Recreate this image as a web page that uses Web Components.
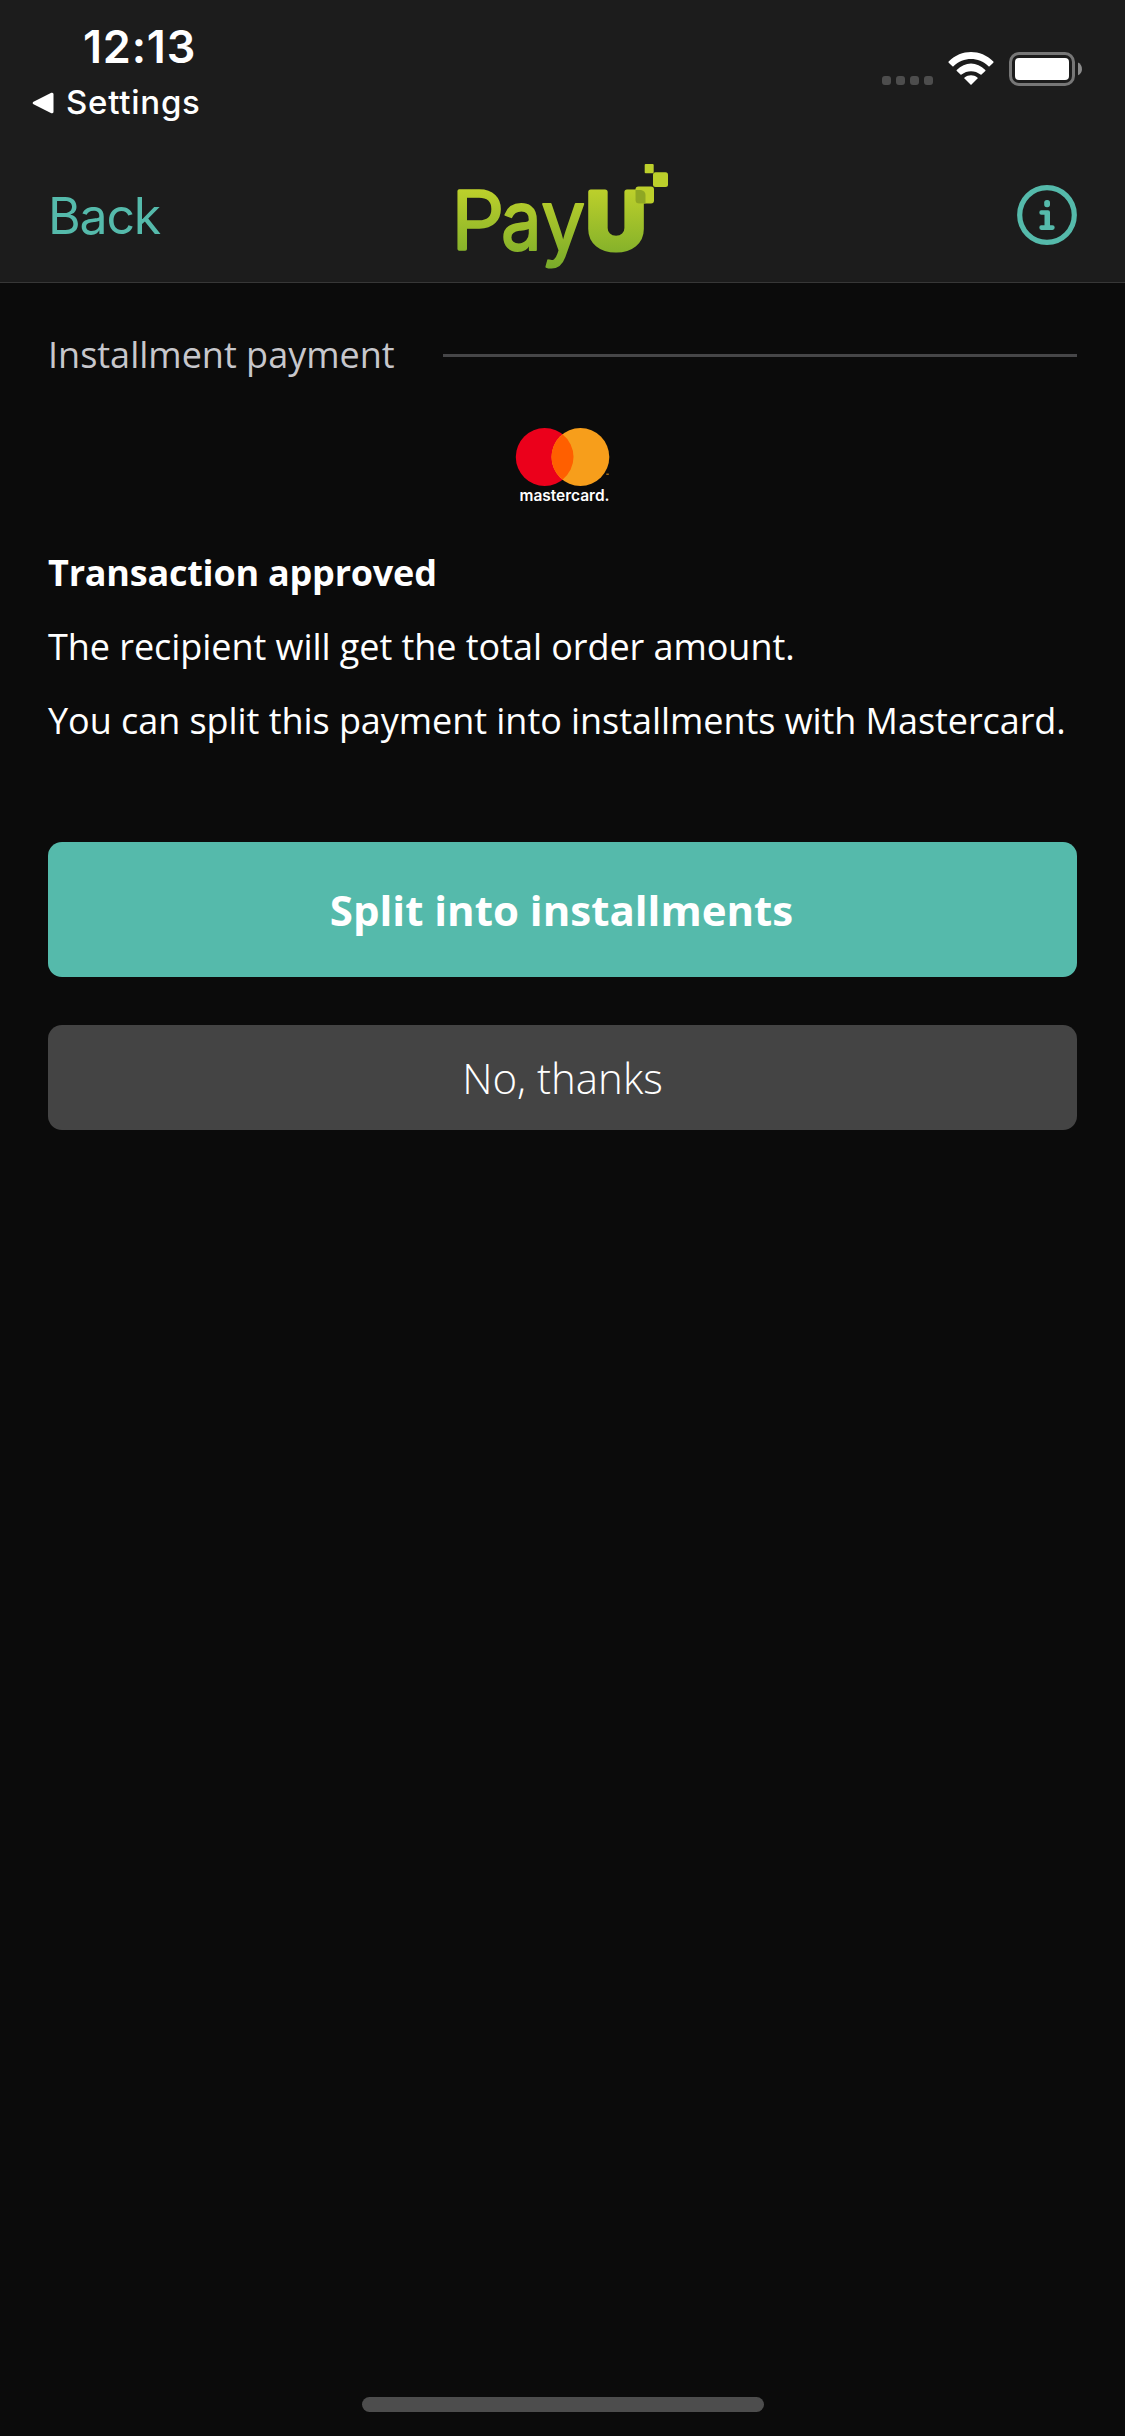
<!DOCTYPE html>
<html lang="en">
<head>
<meta charset="utf-8">
<title>PayU – Installment payment</title>
<style>
html,body{margin:0;background:#0b0b0b}
</style>
</head>
<body>
<installment-screen></installment-screen>
<script>
const define=(name,html)=>customElements.define(name,class extends HTMLElement{
  constructor(){super();const t=document.createElement('template');t.innerHTML=html;
    this.attachShadow({mode:'open'}).append(t.content.cloneNode(true));}
});

define('status-bar',`<style>
:host{display:flex;justify-content:space-between;height:132px;box-sizing:border-box;padding:20px 43px 0 32px;color:#fff;font-family:Inter,sans-serif}
.left{display:flex;flex-direction:column;gap:8px}
.time{font-size:45px;line-height:54px;font-weight:600;padding-left:51px;letter-spacing:.8px}
.crumb{display:flex;align-items:center;gap:12px;font-size:33px;line-height:40px;font-weight:500;letter-spacing:.75px}
.crumb svg{margin-top:1px}
.right{display:flex;align-items:flex-start;padding-top:32px}
svg{display:block}
</style>
<div class="left"><div class="time">12:13</div>
<div class="crumb"><svg width="22" height="22" viewBox="0 0 22 22"><path d="M2.2 11 20 2.2V19.8Z" fill="#fff" stroke="#fff" stroke-width="3" stroke-linejoin="round"/></svg><span>Settings</span></div></div>
<div class="right"><svg width="200" height="34" viewBox="882 52 200 34">
<g fill="#4d4d4d"><rect x="882" y="76" width="9" height="9" rx="3"/><rect x="896" y="76" width="9" height="9" rx="3"/><rect x="910" y="76" width="9" height="9" rx="3"/><rect x="924" y="76" width="9" height="9" rx="3"/></g>
<g fill="#fff"><path d="M971 85 964.5 78.6Q964 78 964.6 77.5C968.4 74.5 973.6 74.5 977.4 77.5Q978 78 977.5 78.6Z"/>
<path d="M956.8 71 960.5 74.6Q961 75 961.5 74.6C967 70 975 70 980.5 74.6Q981 75 981.5 74.6L985.3 71Q985.8 70.4 985.3 70C977 61.300 965 61.300 956.700 70Q956.300 70.400 956.800 71Z"/>
<path d="M948.700 62.700 952.400 66.300Q953 66.800 953.500 66.300C963.500 56.700 978.500 56.700 988.500 66.300Q989 66.800 989.600 66.300L993.300 62.700Q993.900 62.100 993.300 61.500C980.500 48.900 961.500 48.900 948.700 61.500Q948.100 62.100 948.700 62.700Z"/></g>
<rect x="1010.500" y="53.500" width="63" height="31" rx="8.500" fill="none" stroke="#777" stroke-width="3"/>
<rect x="1015" y="58" width="54" height="22" rx="4" fill="#fff"/>
<path d="M1078 62.500C1083.300 64.800 1083.300 73 1078 75.300Z" fill="#8b8b8b"/>
</svg></div>`);

define('payu-logo',`<style>:host{display:block}svg{display:block}
text{font-family:Inter,sans-serif;stroke-linejoin:round}</style>
<svg width="229" height="114" viewBox="448 158 229 114" role="img" aria-label="PayU">
<defs><linearGradient id="g" gradientUnits="userSpaceOnUse" x1="0" y1="-62" x2="0" y2="18"><stop offset="0" stop-color="#bfd12b"/><stop offset="1" stop-color="#79ab2a"/></linearGradient></defs>
<g fill="url(#g)" stroke="url(#g)">
<text transform="translate(451.300 248.700) scale(1.050 1)" font-size="80" font-weight="300" stroke-width="3.500">P</text>
<text transform="translate(501 250.300) scale(.86 1)" font-size="84" font-weight="400" stroke-width="2">a</text>
<text transform="translate(541 250) scale(.94 1)" font-size="84" font-weight="400" stroke-width="2">y</text>
<text transform="translate(586.300 248.500) scale(1.050 1)" font-size="78" font-weight="800" stroke-width="5">U</text>
</g>
<g fill="#bccf2b"><rect x="644.700" y="164" width="9" height="9.200" rx="1"/><rect x="653" y="172.300" width="15" height="14.700" rx="2.500"/><rect x="635.500" y="186.500" width="18.500" height="17" rx="3"/></g>
<path d="M635.500 190H641Q645.500 191 645.500 195V203.500H639Q635.500 203.500 635.500 200Z" fill="#8fa723"/>
</svg>`);

define('info-button',`<style>:host,svg{display:block}</style>
<svg width="60" height="60" viewBox="0 0 60 60"><circle cx="30" cy="30" r="27.300" fill="none" stroke="#55baab" stroke-width="5.200"/>
<g fill="#55baab"><rect x="27.200" y="15" width="5.800" height="7.200" rx="2.600"/><path d="M24.300 25.200H31Q33 25.200 33 27.200V40.300H35.500Q37.700 40.300 37.700 42.600 37.700 45 35.500 45H24.300Q22.300 45 22.300 42.600 22.300 40.300 24.300 40.300H27.500V29.700H24.300Q22.300 29.700 22.300 27.400 22.300 25.200 24.300 25.200Z"/></g></svg>`);

define('nav-bar',`<style>
:host{display:grid;grid-template-columns:1fr auto 1fr;align-items:center;height:151px;box-sizing:border-box;padding:16px 48px 0 48px;border-bottom:1px solid #373737;color:#55baab;font:400 50px/60px Inter,sans-serif;letter-spacing:-1.2px}
::slotted(span){padding-top:2px}
::slotted(info-button){justify-self:end}
</style><slot></slot>`);

define('section-heading',`<style>
:host{display:flex;align-items:center;gap:48px;color:#c7c7cc;line-height:49px}
i{flex:1;height:3px;margin-top:1px;background:#464648}
</style><span><slot></slot></span><i></i>`);

define('mastercard-logo',`<style>:host{display:flex;justify-content:center}svg{display:block}text{font-family:Inter,sans-serif}</style>
<svg width="121" height="84" viewBox="502 427 121 84"><circle cx="544.700" cy="457" r="28.900" fill="#eb001b"/><circle cx="580.400" cy="457" r="28.900" fill="#f79e1b"/>
<path d="M562.500 434.300A28.900 28.900 0 0 1 562.500 479.700A28.900 28.900 0 0 1 562.500 434.300Z" fill="#ff5f00"/>
<path d="M606.300 474.200H608.800" stroke="#c8811a" stroke-width="1.200"/>
<text x="519.500" y="500.500" font-size="15.500" font-weight="600" fill="#fff" textLength="90" lengthAdjust="spacingAndGlyphs">mastercard.</text></svg>`);

define('action-button',`<style>
:host{display:flex;align-items:center;justify-content:center;border-radius:14px;height:105px;background:#444;color:#fff;font-size:42px;font-weight:300;line-height:57px}
:host([primary]){height:135px;background:#55baab;font-weight:700}
:host([primary]) span{margin-right:2px}
</style><span><slot></slot></span>`);

define('home-indicator',`<style>:host{display:block;width:402px;height:15px;border-radius:8px;background:#4d4d4d}</style>`);

define('installment-screen',`<style>
:host{display:flex;flex-direction:column;width:1125px;height:2436px;background:#0b0b0b;color:#fff;font:400 36px/49px "Open Sans",sans-serif;overflow:hidden}
header{background:#1c1c1c}
main{flex:1;display:flex;flex-direction:column;padding:47px 48px 0}
mastercard-logo{margin-top:48px}
.copy{display:flex;flex-direction:column;gap:25px;margin:37px 0 97px}
h1,p{margin:0;font-size:36px;white-space:nowrap}
h1{font-weight:700;letter-spacing:-.22px}
p{letter-spacing:-.055px}
.actions{display:flex;flex-direction:column;gap:48px}
home-indicator{align-self:center;margin:0 0 24px 1px}
</style>
<header><status-bar></status-bar><nav-bar><span>Back</span><payu-logo></payu-logo><info-button></info-button></nav-bar></header>
<main><section-heading>Installment payment</section-heading><mastercard-logo></mastercard-logo>
<div class="copy"><h1>Transaction approved</h1><p>The recipient will get the total order amount.</p><p>You can split this payment into installments with Mastercard.</p></div>
<div class="actions"><action-button primary>Split into installments</action-button><action-button>No, thanks</action-button></div></main>
<home-indicator></home-indicator>`);
</script>
</body>
</html>
